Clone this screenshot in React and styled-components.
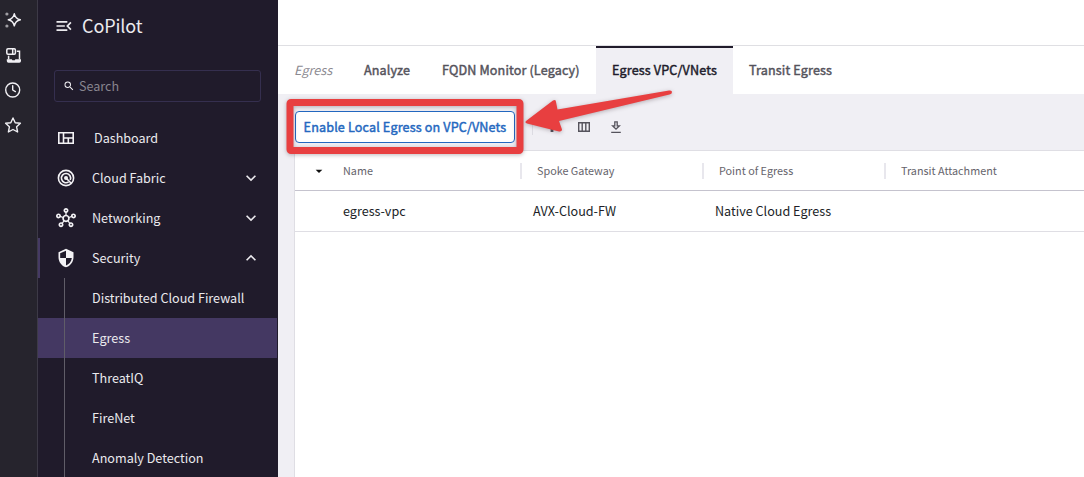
import React from "react";
import styled, { createGlobalStyle, css } from "styled-components";
import { MdMenuOpen, MdSearch, MdOutlineHub, MdSecurity, MdKeyboardArrowDown, MdKeyboardArrowUp, MdArrowDropDown } from "react-icons/md";

const Global = createGlobalStyle`
  * { box-sizing: border-box; }
  body { margin: 0; overflow: hidden; font-family: "Noto Sans CJK SC", "Noto Sans", sans-serif; }
`;
const semibold = css`
  font-weight: 400; -webkit-text-stroke: 0.45px currentColor; letter-spacing: 0.14px;
`;
const Page = styled.div`
  position: relative; display: flex; width: 1084px; height: 477px; overflow: hidden; background: #fff;
`;
const Rail = styled.nav`
  width: 38px; background: #26242d; border-right: 1px solid #3d3a47; display: flex; flex-direction: column;
  padding: 11px 0 0 4px; gap: 17px; color: #f1f0f4;
  svg { display: block; width: 18px; height: 18px; }
`;
const Sidebar = styled.aside`
  width: 240px; background: #201b2b; color: #ebeaee; display: flex; flex-direction: column;
`;
const Brand = styled.div`
  display: flex; align-items: center; flex: none; height: 52px; padding-left: 16px; gap: 8px;
  font-size: 18px; line-height: 24px; letter-spacing: -0.1px;
  span { margin-top: -2px; }
`;
const SearchBox = styled.label`
  display: flex; align-items: center; flex: none; gap: 4px; width: 207px; height: 32px; margin: 18px 0 16px 16px; padding-left: 8px;
  border: 1px solid #352f4f; border-radius: 3px; font-size: 12.6px; line-height: 20px; color: #88858f;
  svg { color: #f1f0f4; }
`;
const Item = styled.div`
  display: flex; align-items: center; flex: none; height: 40px; padding: 0 17px 0 ${(p) => (p.$open ? 16 : 18)}px;
  border-left: ${(p) => (p.$open ? "2px solid #453a64" : "0")};
  font-size: 12.6px; line-height: 20px;
`;
const ItemIcon = styled.span`
  width: 20px; display: flex; justify-content: center; color: #f3f2f5; svg { display: block; }
`;
const ItemText = styled.span`
  flex: 1; margin-left: ${(p) => p.$indent || 16}px;
`;
const SubItem = styled.div`
  position: relative; display: flex; align-items: center; flex: none; height: 40px; margin-right: 1px; padding-left: 54px;
  font-size: 12.6px; line-height: 20px; background: ${(p) => (p.$active ? "#443862" : "transparent")};
  &::before { content: ""; position: absolute; left: 26px; top: 0; bottom: 0; width: 1px; background: #605d68; }
`;
const Main = styled.main`
  flex: 1; min-width: 0; display: flex; flex-direction: column; background: #f0eff4;
`;
const TopBar = styled.header` height: 46px; flex: none; background: #fff; border-bottom: 1px solid #dfdfe3; `;
const Tabs = styled.div` height: 48px; flex: none; display: flex; background: #fff; `;
const Tab = styled.div`
  width: ${(p) => p.$w}px; padding-left: 16px; line-height: 48px; font-size: 12.6px; color: #55535c; white-space: nowrap;
  ${semibold}
  ${(p) => p.$title && css`-webkit-text-stroke: 0; letter-spacing: 0; font-style: italic; color: #8c8a91;`}
  ${(p) => p.$active && css`background: #f0eff4; color: #201b2b; box-shadow: inset 0 2px #201b2b;`}
`;
const Toolbar = styled.div`
  height: 56px; flex: none; display: flex; align-items: center; padding: 10px 0 0 17px; color: #55535c;
`;
const EnableButton = styled.button`
  width: 220px; height: 32px; padding: 0; border: 1px solid #2468c0; border-radius: 4px; background: #fff; color: #2468c0;
  font: 400 12.6px/20px "Noto Sans CJK SC", sans-serif; white-space: nowrap;
  ${semibold}
`;
const Tools = styled.div`
  display: flex; align-items: center; margin-left: 17px; gap: 16px; svg { display: block; }
`;
const Divider = styled.span` width: 1px; height: 16px; background: #dcdbe2; margin-right: -5px; `;
const Table = styled.section`
  flex: 1; margin-left: 16px; background: #fff; border: solid #dfdee4; border-width: 1px 0 0 1px;
`;
const HeadRow = styled.div`
  height: 40px; display: flex; align-items: center; border-bottom: 1px solid #c5c3ce; font-size: 10.8px; line-height: 16px; color: #66646c;
`;
const BodyRow = styled.div`
  height: 41px; display: flex; align-items: center; border-bottom: 1px solid #dfdee4; font-size: 12.6px; line-height: 20px; color: #201e27;
`;
const Sort = styled.span` width: 48px; display: flex; justify-content: center; color: #111; `;
const HeadCell = styled.span`
  width: ${(p) => p.$w}px; height: 16px; padding-left: ${(p) => (p.$first ? 0 : 15)}px; line-height: 15px; white-space: nowrap;
  ${(p) => !p.$first && css`border-left: 2px solid #e8e7ed;`}
`;
const Cell = styled.span` width: ${(p) => p.$w}px; padding-left: ${(p) => p.$pad || 0}px; white-space: nowrap; `;
const Annotation = styled.svg`
  position: absolute; left: 0; top: 0; pointer-events: none; filter: drop-shadow(0 1px 2px rgba(40, 20, 30, 0.3));
`;

const Sparkle = () => (
  <svg viewBox="0 0 18 18" fill="none" stroke="currentColor" strokeWidth="1.5" strokeLinejoin="round">
    <path d="M10.3 2.8Q11.4 7.7 16.3 8.8Q11.4 9.900 10.3 14.800Q9.200 9.900 4.300 8.800Q9.200 7.700 10.300 2.800Z" />
    <g fill="currentColor" stroke="none" opacity=".6"><circle cx="2.900" cy="3" r="1.600" /><circle cx="2.900" cy="15" r="1.600" /></g>
  </svg>
);
const Device = () => (
  <svg viewBox="0 0 18 18" fill="none" stroke="currentColor" strokeWidth="1.500">
    <rect x="2.800" y="2.800" width="8.600" height="5.400" rx="1.200" /><path d="M8.700 2.800v5.400M12.800 5.300h2.700v8.200M4.600 9.800v3.700" />
    <path d="M2.800 13.300h5l.6 1h2.400l.6-1h5.600v1.700q0 1.700-1.700 1.700H4.500q-1.700 0-1.700-1.700z" fill="currentColor" stroke="none" />
  </svg>
);
const Clock = () => (
  <svg viewBox="0 0 18 18" fill="none" stroke="currentColor" strokeWidth="1.4" strokeLinecap="round" strokeLinejoin="round">
    <circle cx="8.7" cy="9" r="7" /><path d="M8.7 4.8V9l2.7 1.6" />
  </svg>
);
const Star = () => (
  <svg viewBox="0 0 18 18" fill="none" stroke="currentColor" strokeWidth="1.4" strokeLinejoin="round">
    <path d="M9 2l2.200 4.700 5.200.6-3.800 3.500 1 5.200L9 13.500l-4.600 2.500 1-5.200L1.600 7.300l5.200-.6z" />
  </svg>
);
const DashboardIcon = () => (
  <svg width="16" height="12" viewBox="0 0 16 12" fill="none" stroke="currentColor" strokeWidth="1.6">
    <path d="M.8.8h14.4v10.4H.8zM5.5.8v10.4M5.5 6h9.700M10.300 6v5.200" />
  </svg>
);
const FabricIcon = () => (
  <svg width="18" height="18" viewBox="0 0 18 18" fill="none" stroke="currentColor" strokeWidth="1.6">
    <circle cx="9" cy="9" r="7.6" /><path d="M11.6 12.9A4.6 4.6 0 1 1 13.2 11" /><circle cx="9" cy="9" r="2" fill="currentColor" stroke="none" /><path d="M9 9l5.2 5.2" />
  </svg>
);
const Columns = () => (
  <svg width="16" height="16" viewBox="0 0 16 16" fill="none" stroke="currentColor" strokeWidth="1.4">
    <path d="M2.7 3.7h10.6v8.6H2.7zM6.2 3.7v8.6M9.8 3.7v8.6" />
  </svg>
);
const Download = () => (
  <svg width="16" height="16" viewBox="0 0 16 16" fill="none" stroke="currentColor" strokeWidth="1.3">
    <path d="M3.2 13.3h9.6M6.8 2.8h2.4v4h2.2L8 10.2 4.6 6.8h2.2z" />
  </svg>
);
const Filter = () => (
  <svg width="16" height="16" viewBox="0 0 16 16" fill="currentColor"><path d="M3 3h10L9.4 8v5H6.6V8z" /></svg>
);

const subItems = ["Distributed Cloud Firewall", "Egress", "ThreatIQ", "FireNet", "Anomaly Detection"];

export default function App() {
  return (
    <Page>
      <Global />
      <Rail><Sparkle /><Device /><Clock /><Star /></Rail>
      <Sidebar>
        <Brand><MdMenuOpen size={20} /><span>CoPilot</span></Brand>
        <SearchBox><MdSearch size={12} /><span>Search</span></SearchBox>
        <Item><ItemIcon><DashboardIcon /></ItemIcon><ItemText $indent={18}>Dashboard</ItemText></Item>
        <Item><ItemIcon><FabricIcon /></ItemIcon><ItemText>Cloud Fabric</ItemText><MdKeyboardArrowDown size={20} /></Item>
        <Item><ItemIcon><MdOutlineHub size={20} /></ItemIcon><ItemText>Networking</ItemText><MdKeyboardArrowDown size={20} /></Item>
        <Item $open><ItemIcon><MdSecurity size={20} /></ItemIcon><ItemText>Security</ItemText><MdKeyboardArrowUp size={20} /></Item>
        {subItems.map((name) => <SubItem key={name} $active={name === "Egress"}>{name}</SubItem>)}
      </Sidebar>
      <Main>
        <TopBar />
        <Tabs>
          <Tab $w={70} $title>Egress</Tab>
          <Tab $w={78}>Analyze</Tab>
          <Tab $w={170}>FQDN Monitor (Legacy)</Tab>
          <Tab $w={137} $active>Egress VPC/VNets</Tab>
          <Tab $w={116}>Transit Egress</Tab>
        </Tabs>
        <Toolbar>
          <EnableButton>Enable Local Egress on VPC/VNets</EnableButton>
          <Tools><Divider /><Filter /><Columns /><Download /></Tools>
        </Toolbar>
        <Table>
          <HeadRow>
            <Sort><MdArrowDropDown size={16} /></Sort>
            <HeadCell $w={177} $first>Name</HeadCell>
            <HeadCell $w={182}>Spoke Gateway</HeadCell>
            <HeadCell $w={182}>Point of Egress</HeadCell>
            <HeadCell $w={182}>Transit Attachment</HeadCell>
          </HeadRow>
          <BodyRow>
            <Cell $w={238} $pad={48}>egress-vpc</Cell>
            <Cell $w={182}>AVX-Cloud-FW</Cell>
            <Cell $w={182}>Native Cloud Egress</Cell>
          </BodyRow>
        </Table>
      </Main>
      <Annotation width="1084" height="477" viewBox="0 0 1084 477" fill="#e83f40">
        <rect x="290" y="102.500" width="230" height="48" rx="1" fill="none" stroke="#e83f40" strokeWidth="7" />
        <path d="M526 121L553 100.500Q556 99 556 102L557.500 109.500L669 90.500Q672 90 672 92Q672 94 669.500 94.500L559 121L562 129.500Q562 132 559 131.500L527 123.500Q524.500 122.500 526 121Z" />
      </Annotation>
    </Page>
  );
}
